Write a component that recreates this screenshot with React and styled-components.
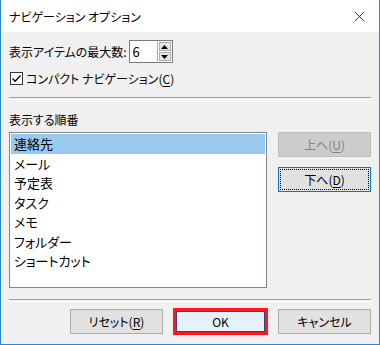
import React from 'react';
import styled, { createGlobalStyle } from 'styled-components';

const GlobalStyle = createGlobalStyle`
  html, body {
    margin: 0;
    padding: 0;
    background: #ffffff;
  }
  body {
    font-family: "Noto Sans CJK JP", "Noto Sans", sans-serif;
    font-feature-settings: "palt";
    font-size: 12px;
    color: #000;
  }
`;

const items = ['連絡先', 'メール', '予定表', 'タスク', 'メモ', 'フォルダー', 'ショートカット'];

function App() {
  return (
    <>
      <GlobalStyle />
      <Window>
        <TitleBar>
          <Title>ナビゲーション オプション</Title>
          <CloseIcon viewBox="0 0 12 12">
            <path d="M1 1 L11 11 M11 1 L1 11" stroke="#222" strokeWidth="1" fill="none" />
          </CloseIcon>
        </TitleBar>

        <Body>
          <Row>
            <Label>表示アイテムの最大数:</Label>
            <Spin>
              <SpinInput>6</SpinInput>
              <SpinButtons>
                <SpinButton>
                  <svg width="7" height="4" viewBox="0 0 7 4"><path d="M3.5 0 L7 4 L0 4 Z" fill="#000" /></svg>
                </SpinButton>
                <SpinButton>
                  <svg width="7" height="4" viewBox="0 0 7 4"><path d="M0 0 L7 0 L3.5 4 Z" fill="#000" /></svg>
                </SpinButton>
              </SpinButtons>
            </Spin>
          </Row>

          <CheckRow>
            <CheckBox>
              <svg width="11" height="11" viewBox="0 0 11 11">
                <path d="M1.5 5.5 L4.2 8.3 L9.5 2.5" stroke="#000" strokeWidth="1.3" fill="none" />
              </svg>
            </CheckBox>
            <span>コンパクト ナビゲーション(<U>C</U>)</span>
          </CheckRow>

          <Separator />

          <SectionLabel>表示する順番</SectionLabel>

          <OrderArea>
            <ListBox>
              {items.map((it, i) => (
                <ListItem key={it} selected={i === 0}>{it}</ListItem>
              ))}
            </ListBox>
            <SideButtons>
              <Button disabled>上へ(<U>U</U>)</Button>
              <Button focused>下へ(<U>D</U>)</Button>
            </SideButtons>
          </OrderArea>

          <Separator />

          <Footer>
            <Button>リセット(<U>R</U>)</Button>
            <Button primary>OK</Button>
            <Button>キャンセル</Button>
          </Footer>
        </Body>
      </Window>
    </>
  );
}

const Window = styled.div`
  width: 380px;
  height: 345px;
  box-sizing: border-box;
  border: 1px solid #2b88d8;
  border-top: none;
  display: flex;
  flex-direction: column;
  background: #f0f0f0;
  overflow: hidden;
`;

const TitleBar = styled.div`
  height: 32px;
  flex: none;
  background: #ffffff;
  display: flex;
  align-items: center;
  justify-content: space-between;
  padding: 0 14px 0 8px;
`;

const Title = styled.div`
  font-size: 12px;
  color: #000;
`;

const CloseIcon = styled.svg`
  width: 11px;
  height: 11px;
`;

const Body = styled.div`
  flex: 1;
  padding: 8px 8px 0 8px;
  display: flex;
  flex-direction: column;
`;

const Row = styled.div`
  display: flex;
  align-items: center;
  height: 23px;
  gap: 2px;
`;

const Label = styled.span`
  line-height: 1;
`;

const Spin = styled.div`
  display: flex;
  align-items: stretch;
  height: 23px;
`;

const SpinInput = styled.div`
  width: 28px;
  box-sizing: border-box;
  background: #fff;
  border: 1px solid #7a7a7a;
  border-right: none;
  padding-left: 3px;
  font-size: 13px;
  display: flex;
  align-items: center;
`;

const SpinButtons = styled.div`
  width: 16px;
  box-sizing: border-box;
  border: 1px solid #7a7a7a;
  border-left: 1px solid #ababab;
  background: #fff;
  display: flex;
  flex-direction: column;
  gap: 1px;
  padding: 1px;
`;

const SpinButton = styled.div`
  flex: 1;
  background: #e6e6e6;
  border: 1px solid #adadad;
  display: flex;
  align-items: center;
  justify-content: center;
`;

const CheckRow = styled.div`
  display: flex;
  align-items: center;
  gap: 3px;
  margin-top: 7px;
  height: 16px;
  padding-left: 1px;
`;

const CheckBox = styled.div`
  width: 13px;
  height: 13px;
  box-sizing: border-box;
  border: 1px solid #333;
  background: #fff;
  display: flex;
  align-items: center;
  justify-content: center;
`;

const U = styled.span`
  text-decoration: underline;
  text-underline-offset: 2px;
`;

const Separator = styled.div`
  height: 1px;
  border-top: 1px solid #a0a0a0;
  border-bottom: 1px solid #ffffff;
  margin: 11px 0 0 0;
  flex: none;
`;

const SectionLabel = styled.div`
  margin-top: 12px;
  height: 16px;
  line-height: 16px;
`;

const OrderArea = styled.div`
  display: flex;
  justify-content: space-between;
  margin-top: 4px;
`;

const ListBox = styled.div`
  width: 258px;
  height: 156px;
  box-sizing: border-box;
  background: #fff;
  border: 1px solid #828790;
  padding: 1px;
  display: flex;
  flex-direction: column;
`;

const ListItem = styled.div`
  height: 19.5px;
  line-height: 19px;
  padding-left: 3px;
  font-size: 13px;
  background: ${p => (p.selected ? '#99c9ef' : 'transparent')};
`;

const SideButtons = styled.div`
  display: flex;
  flex-direction: column;
  gap: 10px;
`;

const Button = styled.div`
  width: 93px;
  height: 25px;
  box-sizing: border-box;
  display: flex;
  align-items: center;
  justify-content: center;
  font-size: 12px;
  background: ${p => (p.disabled ? '#cccccc' : p.primary ? '#e5f1fb' : '#e1e1e1')};
  border: ${p => (p.disabled ? '1px solid #bfbfbf' : p.focused ? '1px solid #0078d7' : p.primary ? '2px solid #ff1a1a' : '1px solid #adadad')};
  color: ${p => (p.disabled ? '#838383' : '#000')};
  outline: ${p => (p.focused ? '1px dotted #000' : 'none')};
  outline-offset: -3px;
  box-shadow: ${p => (p.primary ? 'inset 0 0 0 1px #3c3c8c, 0 0 0 1px #ff1a1a' : 'none')};
`;

const Footer = styled.div`
  display: flex;
  justify-content: flex-end;
  gap: 11px;
  margin-top: 12px;
  margin-top: 7px;
`;

export default App;
